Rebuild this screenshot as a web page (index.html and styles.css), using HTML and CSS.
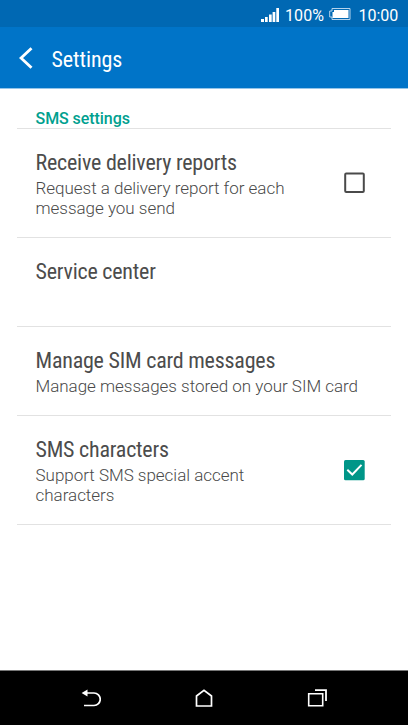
FILE: index.html
```html
<!DOCTYPE html>
<html lang="en">
<head>
<meta charset="utf-8">
<title>Settings</title>
<link rel="stylesheet" href="styles.css">
</head>
<body>
<div class="phone">
  <div class="status">
    <svg class="signal" width="19" height="14" viewBox="0 0 19 14" fill="#fff"><path d="M0 11h3v3H0zM4 9h2.700v5H4zM8 6.500h2.700V14H8zM11.600 4h2.700v10h-2.700zM15.300 0H18v14h-2.700z"/></svg>
    <span class="percent">100%</span>
    <svg class="battery" width="22" height="12" viewBox="0 0 22 12"><path d="M3 .5h18v11H3V9H.7V3H3z" fill="none" stroke="#b5d3ec"/><path d="M5 2h14.500v8H3.500V4H5z" fill="#fff"/></svg>
    <span class="clock">10:00</span>
  </div>
  <header class="bar">
    <svg class="back" width="14" height="22" viewBox="0 0 14 22"><path d="M12.500 1.200 2 11l10.500 9.800" fill="none" stroke="#fff" stroke-width="2.900"/></svg>
    <h1 class="title">Settings</h1>
  </header>
  <main class="list">
    <h2 class="section">SMS settings</h2>
    <div class="row tall">
      <div class="text">
        <div class="name">Receive delivery reports</div>
        <div class="desc">Request a delivery report for each<br>message you send</div>
      </div>
      <svg class="box" width="22" height="22" viewBox="0 0 22 22"><rect x="1.200" y="1.500" width="18.600" height="18.500" rx="1" fill="none" stroke="#4a4a4a" stroke-width="2"/></svg>
    </div>
    <div class="row">
      <div class="text"><div class="name">Service center</div></div>
    </div>
    <div class="row">
      <div class="text">
        <div class="name">Manage SIM card messages</div>
        <div class="desc">Manage messages stored on your SIM card</div>
      </div>
    </div>
    <div class="row tall">
      <div class="text">
        <div class="name">SMS characters</div>
        <div class="desc">Support SMS special accent<br>characters</div>
      </div>
      <svg class="box" width="22" height="22" viewBox="0 0 22 22"><rect x="0" y="1" width="20.700" height="20.300" rx="1.500" fill="#009688"/><path d="m3.300 10.800 5 4.700 9.200-9.600" fill="none" stroke="#fff" stroke-width="2"/></svg>
    </div>
  </main>
  <nav class="nav">
    <svg width="20" height="19" viewBox="0 0 20 19"><path d="M4 4h9a6.250 6.250 0 0 1 0 12.500H3" fill="none" stroke="#fff" stroke-width="1.700"/><path d="M.6 4 6.500 .5v7z" fill="#fff"/></svg>
    <svg width="20" height="19" viewBox="0 0 20 19"><path d="M2.500 17V7L10 1.400 17.500 7v10z" fill="none" stroke="#fff" stroke-width="1.700"/></svg>
    <svg width="20" height="19" viewBox="0 0 20 19" fill="none" stroke="#fff"><path d="M1.700 4.700h14v12.100h-14z" stroke-width="1.600"/><path d="M8 1.200h11V12" stroke-width="1.800"/></svg>
  </nav>
</div>
</body>
</html>
```
FILE: styles.css
```css
* { box-sizing: border-box; }
body { margin: 0; font-family: Roboto, "Liberation Sans", sans-serif; background: #fff; }
svg { display: block; flex: none; }
h1, h2 { margin: 0; }
.phone { width: 408px; height: 725px; display: flex; flex-direction: column; overflow: hidden; background: #fff; }
.status { height: 27px; flex: none; background: #0068b3; color: #fff; display: flex; align-items: center; padding: 3px 0 0 261px; font-size: 16px; white-space: nowrap; }
.signal { margin-right: 5px; margin-bottom: 1px; }
.percent { width: 43.5px; font-weight: 370; letter-spacing: .1px; }
.battery { margin: 0 8px 2px 0; }
.clock { font-weight: 450; }
.bar { height: 62px; flex: none; background: #0074c8; border-bottom: 1px solid #94c5e9; display: flex; align-items: center; padding: 1px 0 0 19px; color: #fff; }
.title { margin: 3px 0 0 18.5px; font-family: "Roboto Condensed", Roboto, sans-serif; font-stretch: 75%; font-size: 22px; font-weight: 400; line-height: 26px; letter-spacing: -.08px; }
.list { flex: 1; padding: 0 17px; }
.section { height: 40px; border-bottom: 1px solid #e2e2e2; padding: 20px 0 0 18.5px; font-size: 16px; line-height: 20px; font-weight: 500; letter-spacing: -.06px; color: #00a08f; }
.row { height: 89px; border-bottom: 1px solid #e2e2e2; padding: 0 26px 0 18.5px; display: flex; justify-content: space-between; align-items: flex-start; white-space: nowrap; }
.tall { height: 109px; }
.text { padding-top: 21px; }
.name { font-family: "Roboto Condensed", Roboto, sans-serif; font-stretch: 75%; font-size: 22px; line-height: 26px; letter-spacing: -.22px; color: #4c4c4c; }
.desc { margin-top: 2px; font-size: 17px; line-height: 20px; font-weight: 300; letter-spacing: -.02px; color: #4a4a4a; }
.box { margin-top: 43px; margin-right: -1px; }
.nav { height: 55px; flex: none; background: #000; border-top: 1px solid #777; display: flex; align-items: center; justify-content: space-between; padding: 0 81px; }
```
